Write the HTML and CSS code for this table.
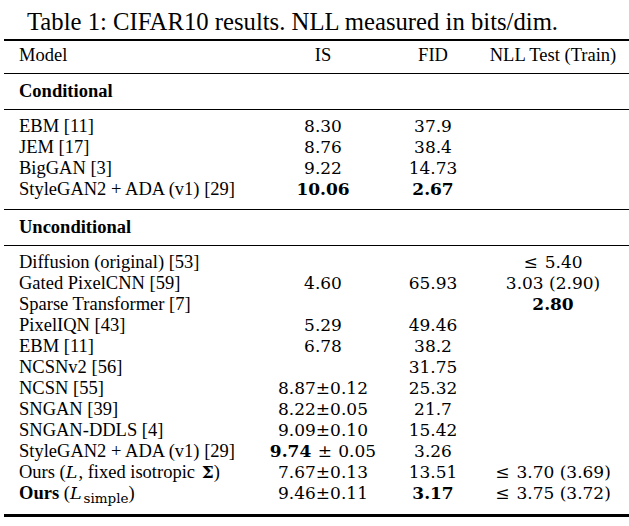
FILE: index.html
```html
<!DOCTYPE html>
<html lang="en">
<head>
<meta charset="utf-8">
<title>Table 1: CIFAR10 results</title>
<link rel="stylesheet" href="styles.css">
</head>
<body>
<div class="page">
  <p class="caption">Table 1: CIFAR10 results. NLL measured in bits/dim.</p>
  <table class="results">
    <colgroup>
      <col class="c-model">
      <col class="c-is">
      <col class="c-fid">
      <col class="c-nll">
    </colgroup>
    <thead>
      <tr class="head">
        <th class="model">Model</th>
        <th>IS</th>
        <th>FID</th>
        <th class="nll">NLL Test (Train)</th>
      </tr>
    </thead>
    <tbody>
      <tr class="section">
        <th class="model" colspan="4">Conditional</th>
      </tr>
      <tr class="first">
        <td class="model">EBM [11]</td>
        <td class="num">8.30</td>
        <td class="num">37.9</td>
        <td class="num nll"></td>
      </tr>
      <tr>
        <td class="model">JEM [17]</td>
        <td class="num">8.76</td>
        <td class="num">38.4</td>
        <td class="num nll"></td>
      </tr>
      <tr>
        <td class="model">BigGAN [3]</td>
        <td class="num">9.22</td>
        <td class="num">14.73</td>
        <td class="num nll"></td>
      </tr>
      <tr class="last">
        <td class="model">StyleGAN2 + ADA (v1) [29]</td>
        <td class="num"><b class="best">10.06</b></td>
        <td class="num"><b class="best">2.67</b></td>
        <td class="num nll"></td>
      </tr>
      <tr class="section">
        <th class="model" colspan="4">Unconditional</th>
      </tr>
      <tr class="first">
        <td class="model">Diffusion (original) [53]</td>
        <td class="num"></td>
        <td class="num"></td>
        <td class="num nll"><span class="rel">≤</span>5.40</td>
      </tr>
      <tr>
        <td class="model">Gated PixelCNN [59]</td>
        <td class="num">4.60</td>
        <td class="num">65.93</td>
        <td class="num nll">3.03 (2.90)</td>
      </tr>
      <tr>
        <td class="model">Sparse Transformer [7]</td>
        <td class="num"></td>
        <td class="num"></td>
        <td class="num nll"><b class="best">2.80</b></td>
      </tr>
      <tr>
        <td class="model">PixelIQN [43]</td>
        <td class="num">5.29</td>
        <td class="num">49.46</td>
        <td class="num nll"></td>
      </tr>
      <tr>
        <td class="model">EBM [11]</td>
        <td class="num">6.78</td>
        <td class="num">38.2</td>
        <td class="num nll"></td>
      </tr>
      <tr>
        <td class="model">NCSNv2 [56]</td>
        <td class="num"></td>
        <td class="num">31.75</td>
        <td class="num nll"></td>
      </tr>
      <tr>
        <td class="model">NCSN [55]</td>
        <td class="num">8.87±0.12</td>
        <td class="num">25.32</td>
        <td class="num nll"></td>
      </tr>
      <tr>
        <td class="model">SNGAN [39]</td>
        <td class="num">8.22±0.05</td>
        <td class="num">21.7</td>
        <td class="num nll"></td>
      </tr>
      <tr>
        <td class="model">SNGAN-DDLS [4]</td>
        <td class="num">9.09±0.10</td>
        <td class="num">15.42</td>
        <td class="num nll"></td>
      </tr>
      <tr>
        <td class="model">StyleGAN2 + ADA (v1) [29]</td>
        <td class="num"><b class="best">9.74</b> <span class="pm">±</span> 0.05</td>
        <td class="num">3.26</td>
        <td class="num nll"></td>
      </tr>
      <tr>
        <td class="model">Ours (<i class="var">L</i>, fixed isotropic <b class="sym">Σ</b>)</td>
        <td class="num">7.67±0.13</td>
        <td class="num">13.51</td>
        <td class="num nll"><span class="rel">≤</span>3.70 (3.69)</td>
      </tr>
      <tr class="final">
        <td class="model"><b class="ours">Ours</b> (<i class="var">L</i><span class="sub">simple</span>)</td>
        <td class="num">9.46±0.11</td>
        <td class="num"><b class="best">3.17</b></td>
        <td class="num nll"><span class="rel">≤</span>3.75 (3.72)</td>
      </tr>
    </tbody>
  </table>
</div>
</body>
</html>
```

FILE: styles.css
```css
html, body {
  margin: 0;
  padding: 0;
  background: #ffffff;
}

body {
  color: #000000;
  font-family: "Liberation Serif", "Times New Roman", serif;
}

.page {
  width: 629px;
}

.caption {
  margin: 0;
  padding: 7px 0 2px 27px;
  font-size: 24.7px;
  line-height: 30px;
  white-space: nowrap;
}

.results {
  margin-left: 4px;
  width: 625px;
  table-layout: fixed;
  border-collapse: separate;
  border-spacing: 0;
  border-top: 2px solid #000000;
  border-bottom: 3px solid #000000;
}

.c-model { width: 259px; }
.c-is { width: 120px; }
.c-fid { width: 100px; }
.c-nll { width: 146px; }

.results th,
.results td {
  padding: 0;
  font-size: 18.5px;
  line-height: 21px;
  font-weight: normal;
  text-align: center;
  white-space: nowrap;
  vertical-align: middle;
}

.results .model {
  text-align: left;
  padding-left: 15px;
}

.results .nll {
  padding-right: 6px;
}

.head th {
  padding-top: 4px;
  padding-bottom: 7px;
  border-bottom: 1px solid #000000;
}

.section th {
  font-weight: bold;
  padding-top: 7px;
  padding-bottom: 7px;
  border-bottom: 1px solid #000000;
}

.results tr.first > td {
  padding-top: 6px;
}

.results tr.last > td {
  padding-bottom: 9px;
  border-bottom: 1px solid #000000;
}

.results tr.final > td {
  padding-bottom: 10px;
}

.results td.num {
  font-family: "DejaVu Serif", serif;
  font-size: 17px;
}

.best {
  font-weight: bold;
}

.pm {
  padding: 0 1px;
}

.rel {
  margin-right: 7px;
}

.var {
  font-family: "DejaVu Serif", serif;
  font-style: italic;
  font-size: 17.5px;
  padding-right: 1px;
}

.sym {
  font-family: "DejaVu Serif", serif;
  font-weight: bold;
  font-size: 17px;
  padding-left: 2px;
}

.ours {
  font-weight: bold;
}

.sub {
  font-family: "DejaVu Serif", serif;
  font-size: 13.5px;
  line-height: 0;
  vertical-align: -4px;
  margin-left: 1px;
}
```
